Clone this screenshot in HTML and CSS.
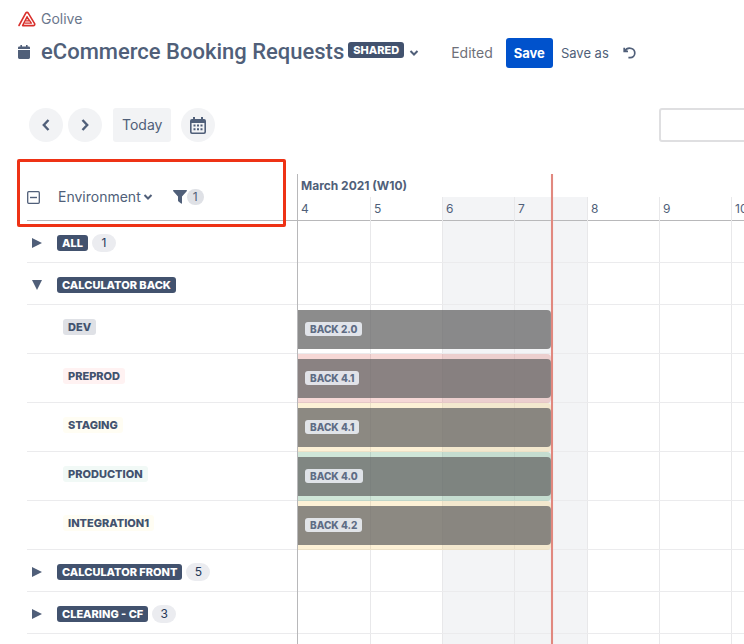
FILE: index.html
```html
<!DOCTYPE html>
<html lang="en">
<head>
<meta charset="utf-8">
<title>eCommerce Booking Requests - Golive</title>
<link rel="stylesheet" href="styles.css">
</head>
<body>
<header class="page-header">
  <a class="crumb" href="#">
    <svg class="crumb-logo" viewBox="0 0 18 16" fill="none" stroke="#d9302c" stroke-linejoin="round" stroke-linecap="round">
      <path d="M1 14.5 7.6 2.3Q9 .4 10.4 2.3L16.6 12.6Q17.2 14.5 15.2 14.6H4.6L9 6" stroke-width="1.6"/>
      <path d="M9 6 13.4 12.2H7.2M8.4 9.8h2.6M9 7.6h1" stroke-width="1.3"/>
    </svg>
    <span>Golive</span>
  </a>
  <div class="title-row">
    <div class="title-group">
      <svg class="title-icon" viewBox="0 0 12 14" fill="#505f79">
        <path d="M2.4 0h1.6v1.6h4V0h1.6v1.6h1.2Q12 1.6 12 2.8V4H0V2.8Q0 1.6 1.2 1.6h1.2zM0 5h12v7.600q0 1.400-1.400 1.400H1.400Q0 14 0 12.600z"/>
      </svg>
      <h1 class="title">eCommerce Booking Requests</h1>
      <span class="tag tag-dark">SHARED</span>
    </div>
    <button class="plain title-menu" aria-label="View options"><svg class="chevron" viewBox="0 0 10 6"><path d="M1.500 1 5 4.500 8.500 1"/></svg></button>
    <span class="edited">Edited</span>
    <button class="save">Save</button>
    <button class="plain save-as">Save as</button>
    <button class="plain undo" aria-label="Revert changes">
      <svg class="undo-icon" viewBox="0 0 13 12" fill="none" stroke="#505f79" stroke-width="1.700"><path d="M1.200.8v3.600h3.800M1.600 4.200C3.500 1.200 6.500.9 8.400 1.500c2 .600 3.400 2.400 3.400 4.500 0 2.600-2 4.600-4.600 4.600H5.400"/></svg>
    </button>
  </div>
</header>

<nav class="toolbar">
  <button class="round" aria-label="Previous"><svg class="arrow" viewBox="0 0 8 12"><path d="M6.500 1 1.800 6l4.700 5"/></svg></button>
  <button class="round" aria-label="Next"><svg class="arrow" viewBox="0 0 8 12"><path d="M1.500 1 6.200 6l-4.700 5"/></svg></button>
  <button class="today">Today</button>
  <button class="round" aria-label="Pick a date">
    <svg class="cal" viewBox="0 0 16 17" fill="#505f79">
      <path fill-rule="evenodd" d="M3 0h2v2h6V0h2v2h1q2 0 2 2v11q0 2-2 2H2q-2 0-2-2V4q0-2 2-2h1zM1.600 6v8.800q0 .7.7.7h11.400q.7 0 .7-.7V6z"/>
      <path d="M3.500 7.600h2v2h-2zm3.500 0h2v2H7zm3.500 0h2v2h-2zm-7 3.600h2v2h-2zm3.500 0h2v2H7zm3.500 0h2v2h-2z"/>
    </svg>
  </button>
  <input class="search" type="text" aria-label="Search">
</nav>

<main class="board">
  <section class="labels">
    <div class="labels-head">
      <button class="plain" aria-label="Collapse all"><svg class="collapse" viewBox="0 0 13 13" fill="none" stroke="#505f79"><rect x=".7" y=".7" width="11.600" height="11.600" rx="1" stroke-width="1.300"/><path d="M3 6.500h7" stroke-width="1.400"/></svg></button>
      <button class="plain env-menu">Environment <svg class="chevron" viewBox="0 0 10 6"><path d="M1.500 1 5 4.500 8.500 1"/></svg></button>
      <button class="plain filter" aria-label="Filter"><svg class="funnel" viewBox="0 0 14 14" fill="#505f79"><path d="M.6 0h12.800q1 .3.300 1.200L9 6.600V13q0 1-.9.600L5.500 11.600Q5 11.200 5 10.600v-4L.3 1.200Q-.4.3.6 0z"/></svg><span class="filter-count">1</span></button>
    </div>
    <div class="row group"><svg class="tri" viewBox="0 0 10 10"><path d="M0 0 10 5 0 10z"/></svg><span class="tag tag-dark">ALL</span><span class="count">1</span></div>
    <div class="row group"><svg class="tri" viewBox="0 0 10 10"><path d="M0 0H10L5 10z"/></svg><span class="tag tag-dark">CALCULATOR BACK</span></div>
    <div class="row env"><span class="tag tag-dev">DEV</span></div>
    <div class="row env"><span class="tag tag-red">PREPROD</span></div>
    <div class="row env"><span class="tag tag-yellow">STAGING</span></div>
    <div class="row env"><span class="tag tag-green">PRODUCTION</span></div>
    <div class="row env"><span class="tag tag-yellow">INTEGRATION1</span></div>
    <div class="row group"><svg class="tri" viewBox="0 0 10 10"><path d="M0 0 10 5 0 10z"/></svg><span class="tag tag-dark">CALCULATOR FRONT</span><span class="count">5</span></div>
    <div class="row group"><svg class="tri" viewBox="0 0 10 10"><path d="M0 0 10 5 0 10z"/></svg><span class="tag tag-dark">CLEARING - CF</span><span class="count">3</span></div>
  </section>

  <section class="timeline">
    <div class="calendar">
      <div class="month">March 2021 (W10)</div>
      <div class="days">
        <div class="day"><span>4</span></div>
        <div class="day"><span>5</span></div>
        <div class="day weekend"><span>6</span></div>
        <div class="day weekend"><span>7</span></div>
        <div class="day"><span>8</span></div>
        <div class="day"><span>9</span></div>
        <div class="day"><span>10</span></div>
      </div>
    </div>
    <div class="lanes">
      <div class="row group"></div>
      <div class="row group"></div>
      <div class="row lane"><div class="span"><div class="bar"><span class="version">BACK 2.0</span></div></div></div>
      <div class="row lane"><div class="span span-red"><div class="bar"><span class="version">BACK 4.1</span></div></div></div>
      <div class="row lane"><div class="span span-yellow"><div class="bar"><span class="version">BACK 4.1</span></div></div></div>
      <div class="row lane"><div class="span span-green"><div class="bar"><span class="version">BACK 4.0</span></div></div></div>
      <div class="row lane"><div class="span span-yellow"><div class="bar"><span class="version">BACK 4.2</span></div></div></div>
      <div class="row group"></div>
      <div class="row group"></div>
    </div>
    <div class="now"></div>
  </section>
  <div class="highlight"></div>
</main>
</body>
</html>
```
FILE: styles.css
```css
* { box-sizing: border-box; }
html { overflow: hidden; }
body {
  margin: 0;
  min-height: 100vh;
  display: flex;
  flex-direction: column;
  overflow: hidden;
  background: #fff;
  color: #505f79;
  font: 14px/20px Inter, "Liberation Sans", sans-serif;
}
svg { display: block; flex: none; }
button { font: inherit; color: inherit; border: 0; padding: 0; cursor: pointer; }
.plain { background: none; display: flex; align-items: center; }

.page-header { padding: 9px 18px 0; }
.crumb { display: inline-flex; align-items: center; gap: 5px; color: #6b778c; text-decoration: none; vertical-align: top; }
.crumb-logo { width: 18px; height: 16px; }
.title-row { display: flex; align-items: center; height: 30px; margin-top: 9px; white-space: nowrap; }
.title-group { display: flex; align-items: center; padding-bottom: 2px; }
.title-icon { width: 12px; height: 14px; margin-right: 11px; }
.title { margin: 0 4px 0 0; font-family: Roboto, Inter, sans-serif; font-size: 22px; line-height: 28px; font-weight: 500; }
.title-group .tag { margin-bottom: 4px; }
.title-menu { margin-left: 5px; }
.chevron { width: 10px; height: 6px; fill: none; stroke: #505f79; stroke-width: 2; }
.edited { margin-left: 32px; color: #6e7079; }
.save { height: 30px; margin: 0 8px 0 13px; padding: 0 8px; border-radius: 3px; background: #0052cc; color: #fff; font-size: 13px; font-weight: 700; }
.save-as { font-size: 13px; }
.undo { margin-left: 14px; }
.undo-icon { width: 13px; height: 12px; }

.tag { display: inline-block; flex: none; padding: 0 5px; border-radius: 3px; font-size: 11px; line-height: 16px; font-weight: 800; color: #42526e; }
.tag-dark { background: #42526e; color: #fff; }
.tag-dev { background: #dfe1e6; }
.tag-red { background: #fff2f2; }
.tag-yellow { background: #fffdf3; }
.tag-green { background: #f1f9f6; }

.toolbar { display: flex; align-items: center; height: 34px; margin-top: 40px; padding-left: 29px; }
.round { display: flex; align-items: center; justify-content: center; flex: none; width: 34px; height: 34px; margin-right: 5px; border-radius: 50%; background: #f2f3f5; }
.arrow { width: 8px; height: 12px; fill: none; stroke: #505f79; stroke-width: 2.400; }
.today { height: 34px; margin: 0 10px 0 6px; padding: 0 9px; border-radius: 3px; background: #f2f3f5; }
.cal { width: 16px; height: 17px; }
.search { flex: none; width: 200px; height: 34px; margin: 0 -115px 0 auto; border: 2px solid #dfdfe1; border-radius: 3px; font: inherit; }

.board { position: relative; flex: 1; display: grid; grid-template-columns: 270px 1fr; margin-top: 32px; padding-left: 27px; }
.labels-head { display: flex; align-items: center; height: 47px; border-bottom: 1px solid #b8b8ba; }
.collapse { width: 13px; height: 13px; }
.env-menu { gap: 2px; margin-left: 18px; }
.filter { margin-left: 20px; }
.funnel { width: 14px; height: 14px; }
.filter-count { padding: 0 6px; border-radius: 8px; background: #dfe1e6; font-size: 12px; line-height: 16px; }

.row { display: flex; align-items: center; border-bottom: 1px solid #ebebed; }
.group { height: 42px; padding: 2px 0 0 5px; }
.env { height: 49px; padding: 0 0 4px 36px; }
.tri { width: 10px; height: 10px; margin-right: 15px; fill: #505f79; }
.count { min-width: 24px; margin-left: 4px; border-radius: 9px; background: #ebecf0; color: #253858; font-size: 12px; line-height: 18px; text-align: center; }

.timeline { display: grid; min-width: 0; overflow: hidden; border-left: 1px solid #b8b8ba; }
.calendar, .lanes, .now { grid-area: 1 / 1; min-width: 0; }
.calendar { display: flex; flex-direction: column; }
.month { height: 23px; padding-left: 3px; font-size: 12px; line-height: 23px; font-weight: 700; }
.days { flex: 1; display: grid; grid-template-columns: repeat(3, 72px) 73px repeat(2, 72px) 1fr; }
.day + .day { border-left: 1px solid #e8e8ea; }
.day { overflow: hidden; }
.day span { display: block; height: 24px; padding-left: 3px; border-bottom: 1px solid #b8b8ba; font-size: 12px; line-height: 24px; }
.weekend { background: #f3f4f6; }
.lanes { padding-top: 47px; }
.lane { height: 49px; align-items: stretch; }
.span { width: 253px; margin-bottom: -1px; padding: 5px 0; border-radius: 0 4px 4px 0; }
.span-red { background: rgba(210, 60, 50, 0.2); }
.span-yellow { background: rgba(245, 185, 50, 0.2); }
.span-green { background: rgba(15, 130, 60, 0.2); }
.bar { display: flex; align-items: center; height: 39px; padding: 0 0 2px 7px; border-radius: 0 4px 4px 0; background: rgba(101, 101, 101, 0.75); }
.version { padding: 0 5px; border-radius: 3px; background: rgba(244, 248, 255, 0.82); color: #5e6c84; font-size: 10px; line-height: 14px; font-weight: 800; }
.now { width: 2px; margin-left: 253px; background: #e1887f; box-shadow: 0 0 1px #f3c4be; }
.highlight { position: absolute; left: 17px; top: -15px; width: 269px; height: 68px; border: 3px solid #ee3215; border-radius: 2px; pointer-events: none; }
```
